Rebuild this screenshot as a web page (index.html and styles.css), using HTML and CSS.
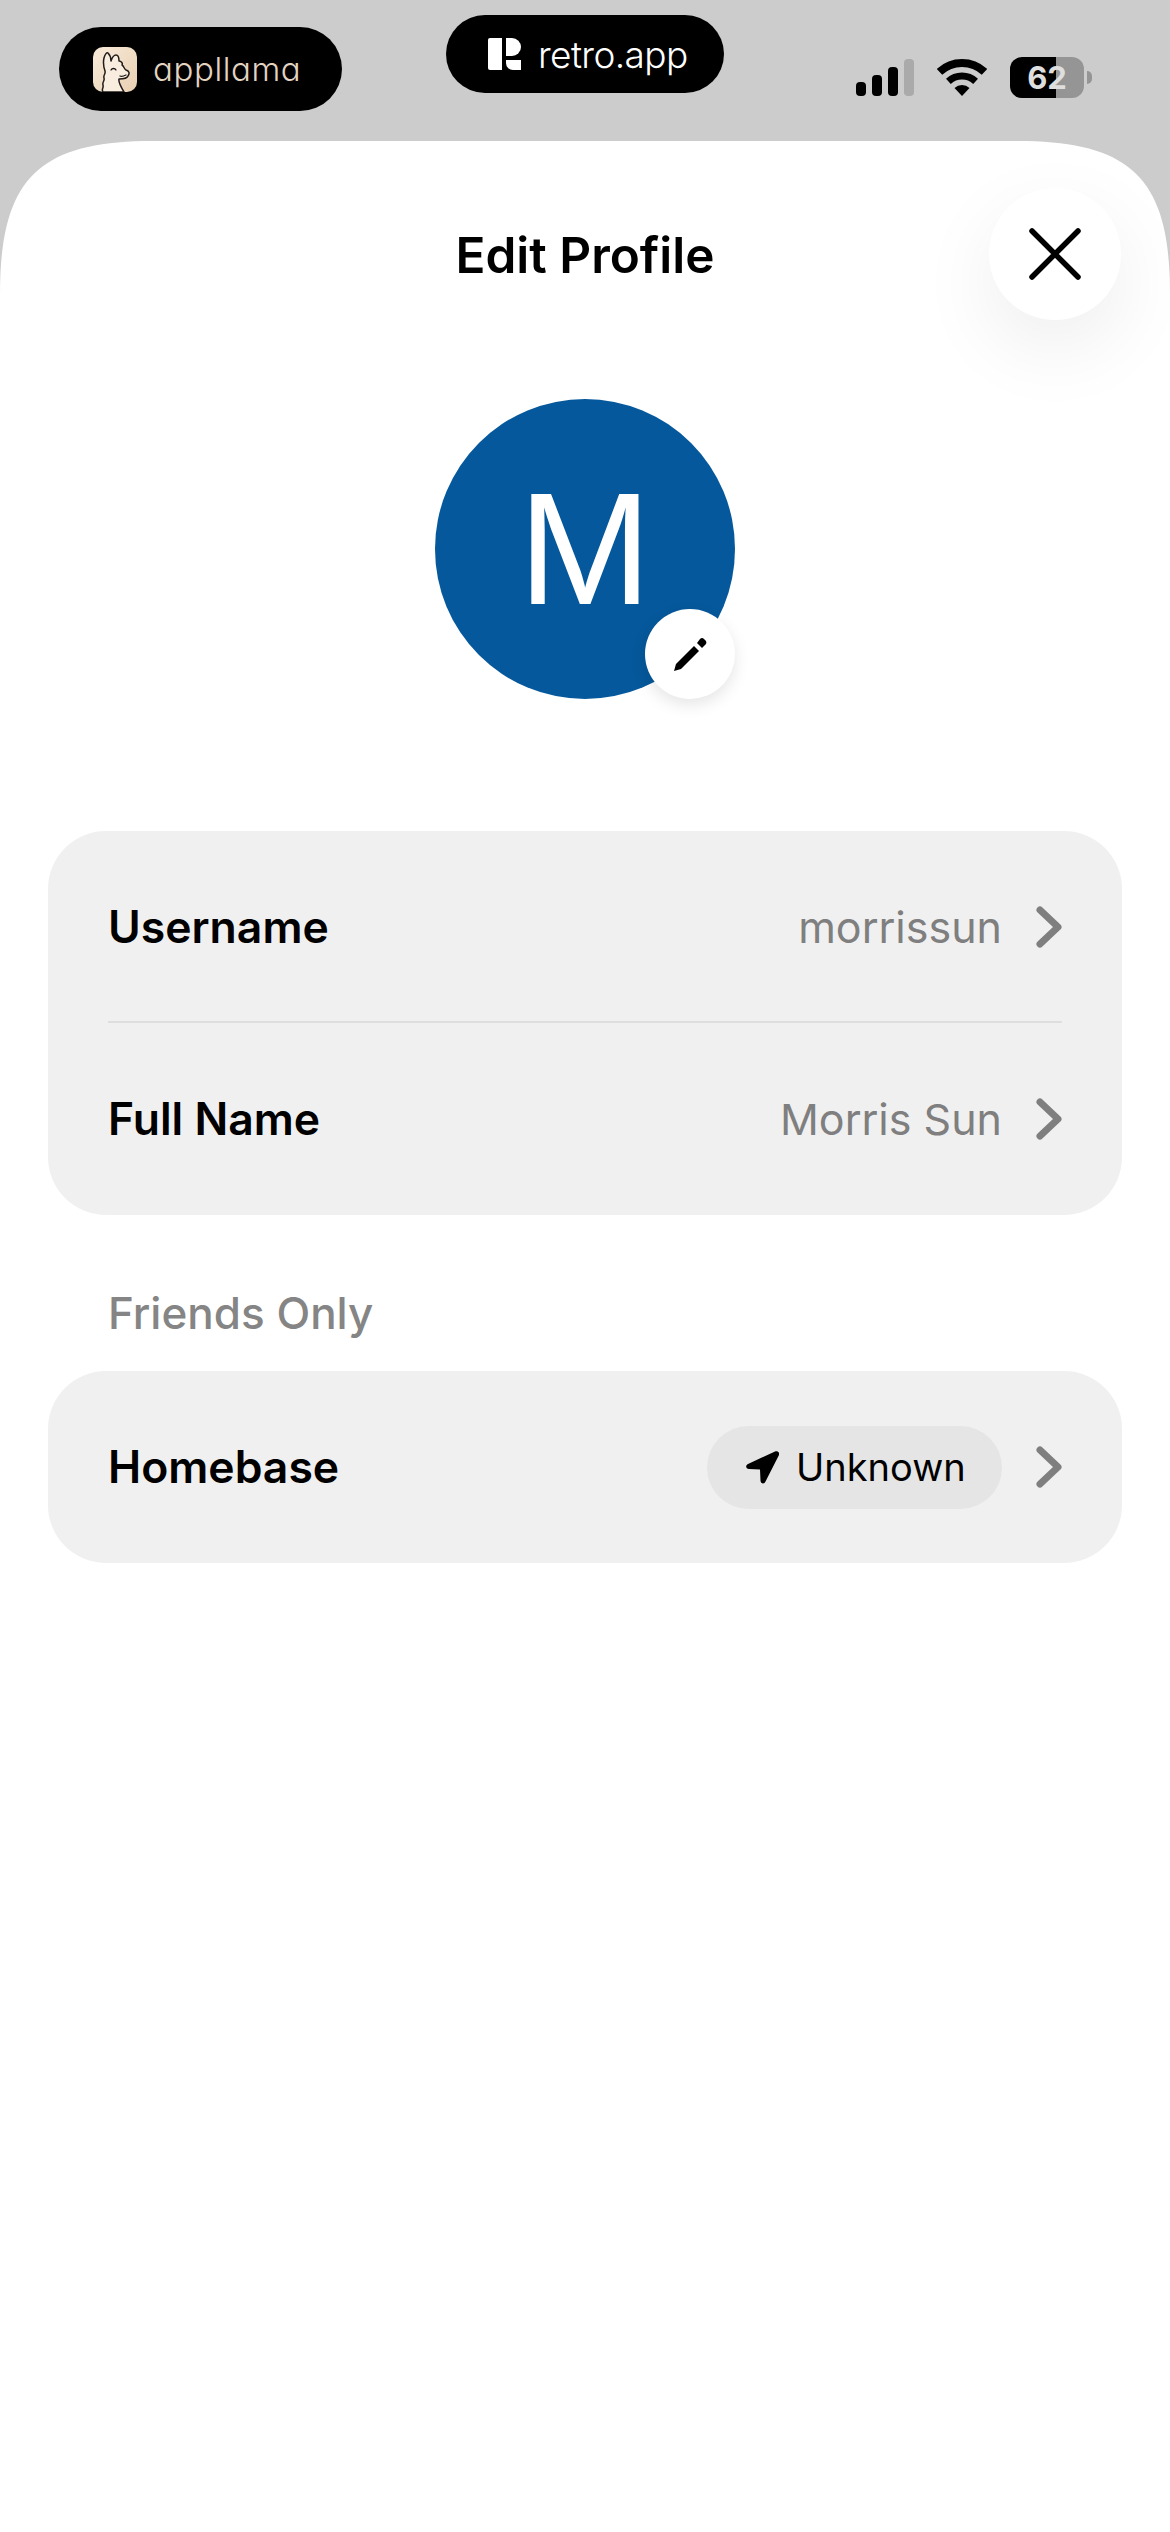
FILE: index.html
```html
<!DOCTYPE html>
<html lang="en">
<head>
    <meta charset="UTF-8">
    <meta name="viewport" content="width=device-width, initial-scale=1.0">
    <title>Edit Profile</title>
    <link rel="stylesheet" href="styles.css">
</head>
<body>
    <div class="status-bar">
        <div class="pill pill-appllama">
            <svg class="llama" viewBox="0 0 44 45">
                <defs>
                    <linearGradient id="llama-bg" x1="0" y1="0" x2="1" y2="1">
                        <stop offset="0" stop-color="#f8ead9"/>
                        <stop offset="1" stop-color="#e9d0b2"/>
                    </linearGradient>
                </defs>
                <rect width="44" height="45" rx="10" fill="url(#llama-bg)"/>
                <path d="M10 45c-2-3 1-4 0-7s2-4 1-7 2-4 1-7-2-9-1-13 3-6 4-5 3 4 3 8c1-3 3-6 5-6s3 3 3 6c2 0 4 2 3 4 2 1 2 4 4 5 3 1 4 3 2 6-1 3-5 3-9 3-1 3 2 8 5 13z" fill="#f9eddf" stroke="#1f1c19" stroke-width="1.500" stroke-linejoin="round"/>
                <path d="M18 23c1-2 4-2 5 0M27 29c2 1 4 0 6-1" fill="none" stroke="#1f1c19" stroke-width="1.300" stroke-linecap="round"/>
            </svg>
            <span class="pill-appllama-name">appllama</span>
        </div>
        <div class="pill pill-retro">
            <svg class="retro-logo" viewBox="0 0 33 32">
                <path d="M2 0h12v32H2a2 2 0 0 1-2-2V2a2 2 0 0 1 2-2z" fill="#fff"/>
                <path d="M18 0h6a9 9 0 0 1 9 9 9 9 0 0 1-9 9h-6z" fill="#fff"/>
                <path d="M18 22h15v10H25a7 7 0 0 1-7-7z" fill="#fff"/>
            </svg>
            <span>retro.app</span>
        </div>
        <div class="status-icons">
            <svg class="signal" viewBox="0 0 58 37">
                <rect x="0" y="23" width="10" height="14" rx="4"/>
                <rect x="16" y="16" width="10" height="21" rx="4"/>
                <rect x="32" y="8" width="10" height="29" rx="4"/>
                <rect x="48" y="0" width="10" height="37" rx="4" fill="#aaa"/>
            </svg>
            <svg class="wifi" viewBox="0 0 50 37">
                <path d="M2.500 12.900A33 33 0 0 1 47.500 12.900" fill="none" stroke="#000" stroke-width="8"/>
                <path d="M11.400 22.400A20 20 0 0 1 38.600 22.400" fill="none" stroke="#000" stroke-width="7"/>
                <path d="M25 37 17.500 29A11 11 0 0 1 32.500 29z"/>
            </svg>
            <div class="battery"><span>62</span></div>
            <div class="battery-nub"></div>
        </div>
    </div>

    <main class="sheet">
        <header class="sheet-header">
            <h1>Edit Profile</h1>
            <button class="close-btn">
                <svg viewBox="0 0 52 52" width="52" height="52">
                    <path d="M3 3l46 46M49 3 3 49" fill="none" stroke="#000" stroke-width="5.500" stroke-linecap="round"/>
                </svg>
            </button>
        </header>

        <div class="avatar">
            M
            <div class="avatar-edit">
                <svg viewBox="0 0 33 34" width="33" height="34">
                    <path d="M0 34l2-7L20 9l5 5L7 32z"/>
                    <path d="M23 6l3-4a3 3 0 0 1 4 0l1.500 1.500a3 3 0 0 1 0 4L28 11z"/>
                </svg>
            </div>
        </div>

        <section class="card card-names">
            <div class="row">
                <span class="row-label">Username</span>
                <span class="row-value">morrissun</span>
                <svg class="chevron" viewBox="0 0 26 42"><path d="M4 4l18 17L4 38"/></svg>
            </div>
            <div class="row-divider"></div>
            <div class="row">
                <span class="row-label">Full Name</span>
                <span class="row-value">Morris Sun</span>
                <svg class="chevron" viewBox="0 0 26 42"><path d="M4 4l18 17L4 38"/></svg>
            </div>
        </section>

        <div class="section-label">Friends Only</div>

        <section class="card">
            <div class="row">
                <span class="row-label">Homebase</span>
                <span class="location-chip">
                    <svg viewBox="0 0 33 33" width="33" height="33">
                        <path d="M29 0.500 2 13c-3 1.500-2 5 1 5l11 .5.500 11c0 3.500 4 4 5 1L33 4c1-2.500-1.500-4.500-4-3.500z"/>
                    </svg>
                    Unknown
                </span>
                <svg class="chevron" viewBox="0 0 26 42"><path d="M4 4l18 17L4 38"/></svg>
            </div>
        </section>
    </main>
</body>
</html>
```

FILE: styles.css
```css
* {
    box-sizing: border-box;
}
body {
    margin: 0;
    height: 2532px;
    overflow: hidden;
    display: flex;
    flex-direction: column;
    background-color: #cccccc;
    font-family: Inter, "Liberation Sans", sans-serif;
    color: #000;
}
.status-bar {
    height: 141px;
    flex-shrink: 0;
    display: flex;
    align-items: flex-start;
    padding-left: 59px;
}
.pill {
    display: flex;
    align-items: center;
    background: #000;
    color: #fff;
}
.pill-appllama {
    width: 283px;
    height: 84px;
    margin-top: 27px;
    border-radius: 42px;
    padding-left: 34px;
    gap: 16px;
}
.llama {
    width: 44px;
    height: 45px;
}
.pill-appllama-name {
    font-size: 33px;
    font-weight: 300;
    font-feature-settings: "cv11";
    letter-spacing: 0.6px;
    color: #e3d3c1;
}
.pill-retro {
    width: 278px;
    height: 78px;
    margin-top: 15px;
    margin-left: 104px;
    border-radius: 39px;
    padding-left: 42px;
    gap: 17px;
    font-size: 37px;
    font-weight: 300;
    letter-spacing: -0.6px;
}
.retro-logo {
    width: 33px;
    height: 32px;
}
.status-icons {
    display: flex;
    align-items: center;
    margin-top: 57px;
    margin-left: 132px;
    height: 41px;
}
.signal {
    width: 58px;
    height: 37px;
}
.wifi {
    width: 50px;
    height: 37px;
    margin-left: 23px;
}
.battery {
    width: 74px;
    height: 41px;
    margin-left: 23px;
    border-radius: 12px;
    background: linear-gradient(to right, #000 62%, #959595 62%);
    display: flex;
    align-items: center;
    justify-content: center;
    font-size: 31px;
    font-weight: 700;
    color: #dedede;
}
.battery-nub {
    width: 5px;
    height: 13px;
    margin-left: 3px;
    border-radius: 0 6px 6px 0;
    background: #959595;
}
.sheet {
    flex: 1;
    display: flex;
    flex-direction: column;
    align-items: center;
    background: #fff;
    /* ios style continuous corners, border-radius is too round here */
    clip-path: path("M0 153C0 38 38 0 153 0H1017C1132 0 1170 38 1170 153V2391H0Z");
}
.sheet-header {
    position: relative;
    width: 100%;
    height: 228px;
    display: flex;
    align-items: center;
    justify-content: center;
}
.sheet-header h1 {
    margin: 0;
    font-size: 49.500px;
    font-weight: 600;
}
.close-btn {
    position: absolute;
    left: 989px;
    top: 47px;
    width: 132px;
    height: 132px;
    padding: 0;
    border: none;
    border-radius: 50%;
    background: #fff;
    box-shadow: 0 28px 80px rgba(0, 0, 0, 0.07);
    display: flex;
    align-items: center;
    justify-content: center;
}
.avatar {
    position: relative;
    width: 300px;
    height: 300px;
    margin-top: 30px;
    border-radius: 50%;
    background: #05589b;
    color: #fff;
    display: flex;
    align-items: center;
    justify-content: center;
    font-family: "Liberation Sans", sans-serif;
    font-size: 160px;
}
.avatar-edit {
    position: absolute;
    right: 0;
    bottom: 0;
    width: 90px;
    height: 90px;
    border-radius: 50%;
    background: #fff;
    box-shadow: 0 6px 16px rgba(0, 0, 0, 0.1);
    display: flex;
    align-items: center;
    justify-content: center;
}
.card {
    width: 1074px;
    background: #f0f0f0;
    border-radius: 58px;
    padding: 0 60px 2px;
}
.card-names {
    margin-top: 132px;
}
.row {
    height: 190px;
    padding-top: 2px;
    display: flex;
    align-items: center;
}
.row-divider {
    height: 2px;
    background: #dedede;
}
.row-label {
    flex: 1;
    font-size: 44.500px;
    font-weight: 600;
}
.row-value {
    font-size: 43px;
    color: #7f7f7f;
}
.chevron {
    width: 26px;
    height: 42px;
    margin-left: 34px;
    fill: none;
    stroke: #7f7f7f;
    stroke-width: 7;
    stroke-linecap: round;
    stroke-linejoin: round;
}
.section-label {
    width: 1074px;
    height: 50px;
    margin-top: 73px;
    margin-bottom: 33px;
    padding-left: 60px;
    line-height: 50px;
    font-size: 44px;
    font-weight: 500;
    color: #858585;
}
.location-chip {
    width: 295px;
    height: 83px;
    border-radius: 42px;
    background: #e5e5e5;
    display: flex;
    align-items: center;
    padding-left: 39px;
    gap: 17px;
    font-size: 38px;
}
```
